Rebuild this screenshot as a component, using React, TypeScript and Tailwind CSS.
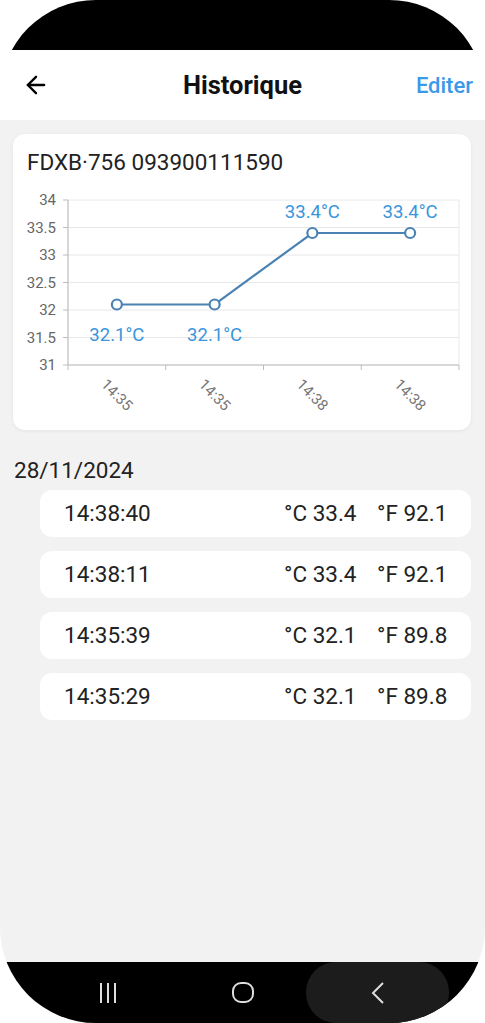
import { ArrowLeft } from 'lucide-react'

const yTicks = ['34', '33.5', '33', '32.5', '32', '31.5', '31']
const points = [
  { t: '14:35', v: 32.1 },
  { t: '14:35', v: 32.1 },
  { t: '14:38', v: 33.4 },
  { t: '14:38', v: 33.4 },
]
const rows = [
  { time: '14:38:40', c: '33.4', f: '92.1' },
  { time: '14:38:11', c: '33.4', f: '92.1' },
  { time: '14:35:39', c: '32.1', f: '89.8' },
  { time: '14:35:29', c: '32.1', f: '89.8' },
]

// chart geometry (svg coords)
const left = 55
const right = 446
const top = 24
const bottom = 189
const step = (right - left) / points.length
const yOf = (v: number) => bottom - ((v - 31) / 3) * (bottom - top)

function Chart() {
  const pts = points.map((p, i) => ({ ...p, x: left + step * (i + 0.5), y: yOf(p.v) }))
  return (
    <svg width="458" height="245" viewBox="0 0 458 245" className="block">
      {yTicks.map((label, i) => {
        const y = top + i * ((bottom - top) / 6)
        return (
          <g key={label}>
            <line x1={left} x2={right} y1={y} y2={y} stroke="#e8e8e8" strokeWidth="1" />
            <line x1={left - 5} x2={left} y1={y} y2={y} stroke="#bdbdbd" strokeWidth="1" />
            <text x={left - 12} y={y + 5} textAnchor="end" fontSize="15" fill="#666">
              {label}
            </text>
          </g>
        )
      })}
      <line x1={right} x2={right} y1={top} y2={bottom} stroke="#e8e8e8" />
      <line x1={left} x2={left} y1={top} y2={bottom} stroke="#bdbdbd" strokeWidth="1.2" />
      <line x1={left} x2={right} y1={bottom} y2={bottom} stroke="#bdbdbd" strokeWidth="1.2" />
      {[0, 1, 2, 3, 4].map((i) => (
        <line key={i} x1={left + step * i} x2={left + step * i} y1={bottom} y2={bottom + 5} stroke="#bdbdbd" />
      ))}
      <polyline
        points={pts.map((p) => `${p.x},${p.y}`).join(' ')}
        fill="none"
        stroke="#4b82b4"
        strokeWidth="2.2"
      />
      {pts.map((p, i) => (
        <g key={i}>
          <circle cx={p.x} cy={p.y} r="5" fill="#fff" stroke="#4b82b4" strokeWidth="2.2" />
          <text
            x={p.x}
            y={p.v > 33 ? p.y - 15 : p.y + 36}
            textAnchor="middle"
            fontSize="18.5"
            fill="#3a95dd"
          >
            {p.v}°C
          </text>
          <text
            x={p.x}
            y={224}
            textAnchor="middle"
            fontSize="15"
            fill="#777"
            transform={`rotate(45 ${p.x} 219)`}
          >
            {p.t}
          </text>
        </g>
      ))}
    </svg>
  )
}

export default function App() {
  return (
    <div className="w-[485px] h-[1023px] bg-white" style={{ fontFamily: 'Roboto, "Noto Sans", sans-serif' }}>
      <div className="h-full rounded-[96px] overflow-hidden flex flex-col">
        {/* status bar */}
        <div className="h-[50px] bg-black shrink-0"></div>

        {/* Header */}
        <div className="h-[70px] bg-white grid grid-cols-3 items-center shrink-0">
          <div className="pl-[22px]">
            <ArrowLeft size={28} strokeWidth={2} className="text-black" />
          </div>
          <h1 className="text-center text-[25.5px] font-bold text-[#111] whitespace-nowrap">Historique</h1>
          <div className="text-right pr-[12px] text-[22px] font-medium text-[#3b9ae8]">Editer</div>
        </div>

        {/* Content */}
        <div className="flex-1 bg-[#f2f2f2] pt-[14px] px-[14px] pl-[13px]">
          <div className="bg-white rounded-[12px] shadow-[0_1px_4px_rgba(0,0,0,0.06)] pt-[14px] pb-[9px]">
            <div className="pl-[14px] h-[28px] leading-[28px] text-[22.5px] text-[#222]">FDXB·756 093900111590</div>
            <Chart />
          </div>

          <div className="mt-[27px] pl-[1px] text-[22.5px] leading-[26px] text-[#222]">28/11/2024</div>

          <div className="ml-[27px] mt-[7px] flex flex-col gap-[14px]">
            {rows.map((r) => (
              <div key={r.time} className="h-[47px] bg-white rounded-[12px] flex items-center pl-[24px] text-[22.5px] text-[#222]">
                <span className="flex-1">{r.time}</span>
                <span className="w-[93px]">°C {r.c}</span>
                <span className="w-[94px]">°F {r.f}</span>
              </div>
            ))}
          </div>
        </div>

        {/* Nav bar */}
        <div className="h-[61px] bg-black shrink-0 grid grid-cols-3 px-[40px]">
          <div className="flex items-center justify-center gap-[5px]">
            <div className="w-[2px] h-[20px] bg-[#ddd]"></div>
            <div className="w-[2px] h-[20px] bg-[#ddd]"></div>
            <div className="w-[2px] h-[20px] bg-[#ddd]"></div>
          </div>
          <div className="flex items-center justify-center">
            <div className="w-[22px] h-[21px] rounded-[9px] border-2 border-[#ddd]"></div>
          </div>
          <div className="flex justify-center">
            <div className="w-[143px] shrink-0 h-full rounded-[30px] bg-[#1c1c1c] flex items-center justify-center">
              <svg width="14" height="22" viewBox="0 0 14 22">
                <polyline points="12,1 2,11 12,21" fill="none" stroke="#ddd" strokeWidth="2" />
              </svg>
            </div>
          </div>
        </div>
      </div>
    </div>
  )
}
